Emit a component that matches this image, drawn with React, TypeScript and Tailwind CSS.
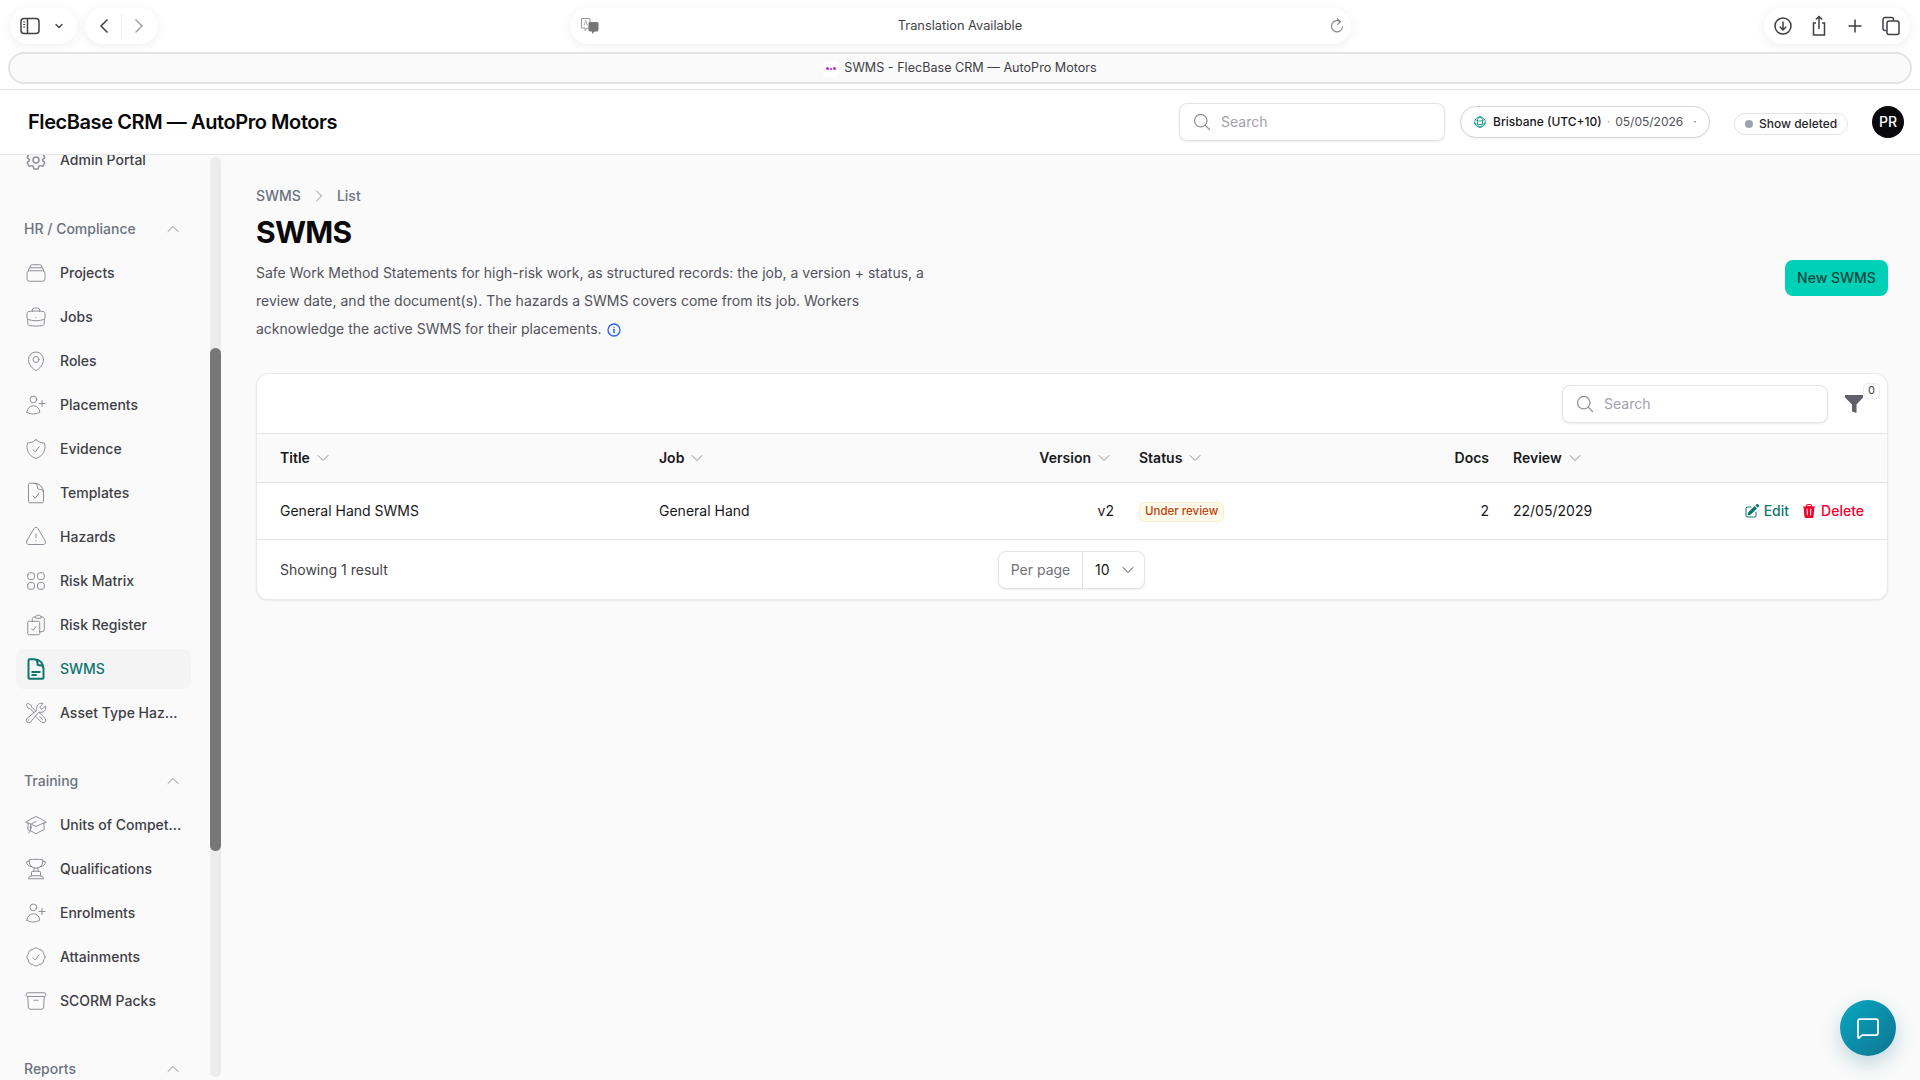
import type { ComponentType, ReactNode } from 'react'
import { ChevronDown, MessageSquare } from 'lucide-react'
import {
  HiOutlineAcademicCap,
  HiOutlineArchiveBox,
  HiOutlineBriefcase,
  HiOutlineCheckBadge,
  HiOutlineChevronDown,
  HiOutlineChevronRight,
  HiOutlineChevronUp,
  HiOutlineClipboardDocumentCheck,
  HiOutlineCog6Tooth,
  HiOutlineDocumentCheck,
  HiOutlineDocumentText,
  HiOutlineExclamationTriangle,
  HiOutlineGlobeAlt,
  HiOutlineInformationCircle,
  HiOutlineMagnifyingGlass,
  HiOutlineMapPin,
  HiOutlineRectangleStack,
  HiOutlineShieldCheck,
  HiOutlineSquares2X2,
  HiOutlineTrophy,
  HiOutlineUserPlus,
  HiOutlineWrenchScrewdriver,
  HiPencilSquare,
  HiTrash,
} from 'react-icons/hi2'

type NavIcon = ComponentType<{ className?: string; strokeWidth?: number }>

type NavItem = {
  label: string
  icon: NavIcon
  active?: boolean
}

const hrItems: NavItem[] = [
  { label: 'Projects', icon: HiOutlineRectangleStack },
  { label: 'Jobs', icon: HiOutlineBriefcase },
  { label: 'Roles', icon: HiOutlineMapPin },
  { label: 'Placements', icon: HiOutlineUserPlus },
  { label: 'Evidence', icon: HiOutlineShieldCheck },
  { label: 'Templates', icon: HiOutlineDocumentCheck },
  { label: 'Hazards', icon: HiOutlineExclamationTriangle },
  { label: 'Risk Matrix', icon: HiOutlineSquares2X2 },
  { label: 'Risk Register', icon: HiOutlineClipboardDocumentCheck },
  { label: 'SWMS', icon: HiOutlineDocumentText, active: true },
  { label: 'Asset Type Hazards', icon: HiOutlineWrenchScrewdriver },
]

const trainingItems: NavItem[] = [
  { label: 'Units of Competency', icon: HiOutlineAcademicCap },
  { label: 'Qualifications', icon: HiOutlineTrophy },
  { label: 'Enrolments', icon: HiOutlineUserPlus },
  { label: 'Attainments', icon: HiOutlineCheckBadge },
  { label: 'SCORM Packs', icon: HiOutlineArchiveBox },
]

function Pill({ className, children }: { className: string; children: ReactNode }) {
  return (
    <div className={`flex h-9 items-center rounded-[18px] bg-white shadow-[0_2px_12px_rgba(0,0,0,0.07)] ${className}`}>
      {children}
    </div>
  )
}

function BrowserBar() {
  return (
    <div className="h-[90px] shrink-0 border-b border-[#e5e5e5] bg-white pt-2">
      <div className="grid grid-cols-[1fr_781px_1fr] px-[10px]">
        <div className="flex gap-2">
          <Pill className="w-[67px] pl-[10px]">
            <svg viewBox="0 0 20 18" className="h-[18px] w-5" fill="none" stroke="#3f3f46" strokeWidth="1.5">
              <rect x="1" y="1.5" width="18" height="15" rx="3" />
              <path d="M7.5 1.5v15" />
              <path d="M3.2 5h2M3.2 7.5h2M3.2 10h2" strokeWidth="1" />
            </svg>
            <ChevronDown className="ml-[13px] h-3 w-3 text-[#3f3f46]" strokeWidth={2.5} />
          </Pill>
          <Pill className="w-[73px] justify-between px-[14px]">
            <svg viewBox="0 0 10 16" className="h-4 w-[10px]" fill="none" stroke="#3f3f46" strokeWidth="1.5">
              <path d="M8.5 1.5 2 8l6.5 6.5" />
            </svg>
            <div className="h-6 w-px bg-[#eeeeee]" />
            <svg viewBox="0 0 10 16" className="h-4 w-[10px]" fill="none" stroke="#a1a1aa" strokeWidth="1.5">
              <path d="M1.5 1.5 8 8l-6.5 6.5" />
            </svg>
          </Pill>
        </div>
        <Pill className="grid grid-cols-[1fr_auto_1fr] px-[10px]">
          <svg viewBox="0 0 20 18" className="h-[18px] w-5">
            <path d="M1.5 1.5h8.5v9.5H7l-2 2.5v-2.5H1.5z" fill="#fff" stroke="#9a9a9a" strokeWidth="1" />
            <path d="M4 8.5 5.8 3.5 7.5 8.5" fill="none" stroke="#9a9a9a" strokeWidth="0.8" />
            <rect x="8.5" y="5" width="10" height="9.5" rx="1.5" fill="#777" />
            <path d="M12 14v3l3-3z" fill="#777" />
          </svg>
          <span className="text-[12.8px] text-[#3f3f46]">Translation Available</span>
          <svg viewBox="0 0 16 18" className="mr-[-4px] h-[18px] w-4 justify-self-end" fill="none" stroke="#8a8a8a" strokeWidth="1.2">
            <path d="M11.5 4.8A5.6 5.6 0 1 0 13.6 9.5" />
            <path d="M8 1.5l3.6 3.2L8.2 7.6" />
          </svg>
        </Pill>
        <div className="flex justify-end">
          <Pill className="w-[146px] justify-between px-[9px]">
            <svg viewBox="0 0 20 20" className="h-5 w-5" fill="none" stroke="#3f3f46" strokeWidth="1.5">
              <circle cx="10" cy="10" r="8" />
              <path d="M10 5.5v8.5M6.8 10.8 10 14l3.2-3.2" />
            </svg>
            <svg viewBox="0 0 20 22" className="h-[22px] w-5" fill="none" stroke="#3f3f46" strokeWidth="1.5">
              <path d="M7 8H4.5v12h11V8H13" />
              <path d="M10 14V1.5M6.8 4.5 10 1.5l3.2 3" />
            </svg>
            <svg viewBox="0 0 20 20" className="h-5 w-5" fill="none" stroke="#3f3f46" strokeWidth="1.5">
              <path d="M10 3.5v13M3.5 10h13" />
            </svg>
            <svg viewBox="0 0 20 20" className="h-5 w-5" fill="none" stroke="#3f3f46" strokeWidth="1.5">
              <path d="M5 14.5H4a2 2 0 0 1-2-2V3.5a2 2 0 0 1 2-2h6.5a2 2 0 0 1 2 2V4.5" />
              <rect x="6" y="5" width="12" height="13.5" rx="2" />
            </svg>
          </Pill>
        </div>
      </div>
      <div className="mx-2 mt-2 flex h-[32px] items-center justify-center gap-[5px] rounded-full border-2 border-[#e4e4e4] bg-[#fafafa] pt-px">
        <div className="flex h-4 w-4 items-center justify-center gap-px rounded-sm bg-white">
          <div className="h-[3px] w-[3px] rounded-full bg-[#c026d3]" />
          <div className="h-[2px] w-[2px] bg-[#a855f7]" />
          <div className="h-[3px] w-[3px] rounded-full bg-[#c026d3]" />
        </div>
        <span className="text-[12.6px] text-[#3f3f46]">SWMS - FlecBase CRM — AutoPro Motors</span>
      </div>
    </div>
  )
}

function SearchBox({ className }: { className: string }) {
  return (
    <div className={`flex h-[38px] items-center gap-[9px] rounded-lg border border-[#e4e4e7] bg-white px-3 shadow-[0_1px_2px_rgba(0,0,0,0.08)] ${className}`}>
      <HiOutlineMagnifyingGlass className="h-5 w-5 text-[#8e8e98]" />
      <span className="text-sm text-[#a1a1aa]">Search</span>
    </div>
  )
}

function AppHeader() {
  return (
    <header className="flex h-[65px] shrink-0 items-center border-b border-[#e5e5e5] bg-white pl-7 pr-4">
      <h2 className="whitespace-nowrap text-xl font-semibold tracking-[-0.42px] text-[#09090b]">FlecBase CRM — AutoPro Motors</h2>
      <SearchBox className="ml-auto w-[266px] shrink-0" />
      <div className="ml-[15px] flex h-8 w-[250px] shrink-0 items-center whitespace-nowrap rounded-full border border-[#d4d4d8] bg-white px-3 shadow-[0_1px_2px_rgba(0,0,0,0.05)]">
        <HiOutlineGlobeAlt className="h-[14px] w-[14px] shrink-0 text-[#0d9488]" />
        <span className="ml-[6px] text-xs font-medium text-[#18181b]">Brisbane (UTC+10)</span>
        <span className="ml-[5px] text-xs text-[#a1a1aa]">·</span>
        <span className="ml-[5px] text-xs text-[#52525b]">05/05/2026</span>
        <span className="ml-[10px] text-xs text-[#71717a]">·</span>
      </div>
      <div className="ml-6 mt-1 flex h-[22px] w-[114px] shrink-0 items-center gap-[6px] whitespace-nowrap rounded-full border border-[#e4e4e7] bg-white px-[10px]">
        <div className="h-2 w-2 shrink-0 rounded-full bg-[#9ca3af]" />
        <span className="text-xs font-medium text-[#27272a]">Show deleted</span>
      </div>
      <div className="ml-6 flex h-8 w-8 shrink-0 items-center justify-center rounded-full bg-[#09090b] text-sm font-medium text-white">PR</div>
    </header>
  )
}

function NavGroup({ title, items }: { title: string; items: NavItem[] }) {
  return (
    <div className="flex flex-col">
      <div className="flex h-6 items-center justify-between pl-[8px] pr-[10px]">
        <span className="text-sm font-medium text-[#6b7280]">{title}</span>
        <HiOutlineChevronUp className="h-4 w-4 text-[#8e8e98]" />
      </div>
      {items.length > 0 && (
        <ul className="mt-3 flex flex-col gap-1">
          {items.map((item) => {
            const Icon = item.icon
            return (
              <li
                key={item.label}
                className={`flex h-10 items-center gap-[12px] rounded-lg px-2 ${item.active ? 'bg-[#f4f4f5]' : ''}`}
              >
                <Icon
                  className={`h-6 w-6 shrink-0 ${item.active ? 'text-[#0f766e]' : 'text-[#8e8e98]'}`}
                  strokeWidth={item.active ? 2 : undefined}
                />
                <span className={`truncate text-sm font-medium ${item.active ? 'text-[#0f766e]' : 'text-[#3f3f46]'}`}>
                  {item.label}
                </span>
              </li>
            )
          })}
        </ul>
      )}
    </div>
  )
}

function Sidebar() {
  return (
    <aside className="flex w-[221px] shrink-0">
      <div className="w-[210px] shrink-0 overflow-hidden pl-4 pr-[19px]">
        <div className="-mt-[15px] flex h-10 items-center gap-[12px] px-2">
          <HiOutlineCog6Tooth className="h-6 w-6 shrink-0 text-[#8e8e98]" />
          <span className="text-sm font-medium text-[#3f3f46]">Admin Portal</span>
        </div>
        <div className="mt-[37px] flex flex-col gap-9">
          <NavGroup title="HR / Compliance" items={hrItems} />
          <NavGroup title="Training" items={trainingItems} />
          <NavGroup title="Reports" items={[]} />
        </div>
      </div>
      <div className="mt-[2px] h-[920px] w-[11px] shrink-0 rounded-full bg-[#ececec] pt-[191px]">
        <div className="h-[503px] rounded-full bg-[#777777]" />
      </div>
    </aside>
  )
}

function SortHead({ label, className = '' }: { label: string; className?: string }) {
  return (
    <span className={`inline-flex items-center gap-[5px] ${className}`}>
      {label}
      <HiOutlineChevronDown className="h-4 w-4 text-[#8e8e98]" />
    </span>
  )
}

function SwmsTable() {
  return (
    <div className="rounded-xl border border-[#e9e9eb] bg-white shadow-[0_1px_2px_rgba(0,0,0,0.07)]">
      <div className="flex h-[59px] items-center justify-end pr-6">
        <SearchBox className="w-[266px]" />
        <div className="relative ml-[17px]">
          <svg viewBox="0 0 18 18" className="h-[18px] w-[18px]" fill="#5f6068">
            <path d="M0 0h18v2.5L11.5 9.5V18L7 16.5V9.5L0 2.5z" />
          </svg>
          <span className="absolute -top-[11px] left-[19px] flex h-[14px] w-[15px] items-center justify-center rounded bg-white text-[11px] text-[#3f3f46] ring-1 ring-[#ececee]">
            0
          </span>
        </div>
      </div>
      <table className="w-full table-fixed border-collapse text-sm">
        <colgroup>
          <col className="w-[391px]" />
          <col className="w-[332px]" />
          <col className="w-[146px]" />
          <col className="w-[225px]" />
          <col className="w-[150px]" />
          <col className="w-[199px]" />
          <col />
        </colgroup>
        <thead>
          <tr className="h-[49px] border-y border-[#e5e5e5] bg-[#fafafa] text-left text-[#18181b]">
            <th className="pl-[23px] pr-3 font-semibold"><SortHead label="Title" /></th>
            <th className="pl-[11px] pr-3 font-semibold"><SortHead label="Job" /></th>
            <th className="px-3 text-right font-semibold"><SortHead label="Version" className="pr-[2px]" /></th>
            <th className="pl-[13px] pr-3 font-semibold"><SortHead label="Status" /></th>
            <th className="px-3 text-right font-semibold">Docs</th>
            <th className="px-3 font-semibold"><SortHead label="Review" /></th>
            <th />
          </tr>
        </thead>
        <tbody>
          <tr className="h-[57px] border-b border-[#e5e5e5] text-[#18181b]">
            <td className="pl-[23px] pr-3">General Hand SWMS</td>
            <td className="pl-[11px] pr-3">General Hand</td>
            <td className="px-3 text-right">v2</td>
            <td className="pl-[13px] pr-3">
              <span className="inline-flex h-[20px] items-center rounded-md border border-[#fdecc8] bg-[#fffbeb] px-[5px] text-[11.5px] font-medium text-[#c2410c]">
                Under review
              </span>
            </td>
            <td className="px-3 text-right">2</td>
            <td className="px-3">22/05/2029</td>
            <td className="pr-[23px]">
              <div className="flex items-center justify-end gap-3 font-medium">
                <span className="flex items-center gap-1 text-[#0f766e]">
                  <HiPencilSquare className="h-4 w-4" />
                  Edit
                </span>
                <span className="flex items-center gap-1 text-[#f0002d]">
                  <HiTrash className="h-4 w-4" />
                  Delete
                </span>
              </div>
            </td>
          </tr>
        </tbody>
      </table>
      <div className="grid h-[59px] grid-cols-[1fr_auto_1fr] items-center pl-[23px] pr-6">
        <span className="text-sm text-[#3f3f46]">Showing 1 result</span>
        <div className="flex h-[38px] w-[147px] items-center rounded-lg border border-[#e4e4e7] bg-white text-sm shadow-[0_1px_2px_rgba(0,0,0,0.08)]">
          <span className="flex h-full w-[84px] items-center justify-center border-r border-[#e4e4e7] text-[#71717a]">Per page</span>
          <span className="ml-3 text-[#18181b]">10</span>
          <HiOutlineChevronDown className="ml-[10px] h-4 w-4 text-[#3f3f46]" />
        </div>
      </div>
    </div>
  )
}

export default function App() {
  return (
    <div className="flex h-screen flex-col overflow-hidden bg-[#fafafa] font-[Inter,sans-serif]">
      <BrowserBar />
      <AppHeader />
      <div className="flex min-h-0 flex-1">
        <Sidebar />
        <main className="flex-1 pl-[35px] pr-8 pt-[31px]">
          <nav className="flex h-5 items-center gap-[10px] text-sm font-medium text-[#6b7280]">
            <span>SWMS</span>
            <HiOutlineChevronRight className="h-4 w-4 text-[#8e8e98]" />
            <span>List</span>
          </nav>
          <h1 className="mt-2 text-3xl font-bold tracking-tight text-[#09090b]">SWMS</h1>
          <div className="mt-[9px] flex items-start justify-between">
            <p className="w-[672px] text-sm leading-7 text-[#52525b]">
              Safe Work Method Statements for high-risk work, as structured records: the job, a version + status, a
              review date, and the document(s). The hazards a SWMS covers come from its job. Workers acknowledge the
              active SWMS for their placements.
              <HiOutlineInformationCircle className="ml-1 inline h-4 w-4 text-[#2563eb]" strokeWidth={2} />
            </p>
            <button className="mt-px h-9 w-[103px] rounded-lg bg-[#00d0b5] text-sm font-medium text-[#0b4a42]">New SWMS</button>
          </div>
          <div className="mt-[30px]">
            <SwmsTable />
          </div>
        </main>
      </div>
      <button className="fixed bottom-6 right-6 flex h-14 w-14 items-center justify-center rounded-full bg-gradient-to-br from-[#06a8c4] to-[#0e7490] shadow-[0_8px_20px_rgba(14,116,144,0.25)]">
        <MessageSquare className="h-6 w-6 text-white" strokeWidth={1.75} />
      </button>
    </div>
  )
}
